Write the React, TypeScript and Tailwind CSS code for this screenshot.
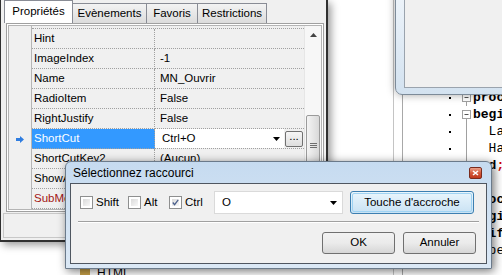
import React from 'react';

const props = [
  { name: 'Hint', value: '' },
  { name: 'ImageIndex', value: '-1' },
  { name: 'Name', value: 'MN_Ouvrir' },
  { name: 'RadioItem', value: 'False' },
  { name: 'RightJustify', value: 'False' },
  { name: 'ShortCut', value: 'Ctrl+O', selected: true },
  { name: 'ShortCutKey2', value: '(Aucun)' },
  { name: 'ShowAlwaysOnTop', value: 'False' },
  { name: 'SubMenuImages', value: '', red: true },
];

// code lines of the editor behind, y centre 98 + 17*i
const code = [
  { text: 'procedure', bold: true, fold: 'box' },
  { text: 'begin', bold: true, fold: 'box' },
  { text: '  Label1', bold: false, fold: 'line' },
  { text: '  Haut', bold: false, fold: 'line' },
  { text: 'end;', bold: true, fold: 'end' },
  { text: '', bold: false, fold: '' },
  { text: 'procedure', bold: true, fold: '' },
  { text: 'begin', bold: true, fold: '' },
  { text: '  if', bold: true, fold: '' },
  { text: '  pe', bold: false, fold: '' },
];

function DownArrow() {
  return (
    <svg width="7" height="4" viewBox="0 0 7 4">
      <path d="M0 0h7L3.5 4z" fill="#000" />
    </svg>
  );
}

function Fold({ kind }: { kind: string }) {
  return (
    <svg width="21" height="17" viewBox="0 0 21 17">
      {kind === 'box' && (
        <>
          <line x1="14.5" y1="12.5" x2="14.5" y2="17" stroke="#a0a0a0" />
          <rect x="10.5" y="4.5" width="8" height="8" fill="#fff" stroke="#a0a0a0" />
          <line x1="12.5" y1="8.5" x2="16.5" y2="8.5" stroke="#555" />
        </>
      )}
      {kind === 'line' && <line x1="14.5" y1="0" x2="14.5" y2="17" stroke="#a0a0a0" />}
      {kind === 'end' && <path d="M14.5 0v8.5h5" fill="none" stroke="#a0a0a0" />}
    </svg>
  );
}

function Checkbox({ checked }: { checked?: boolean }) {
  return (
    <div className="w-[13px] h-[13px] shrink-0 border border-[#8e8f8f] bg-white p-[2px]">
      <div className="w-full h-full bg-gradient-to-br from-[#dadada] to-[#f8f8f8] flex items-center justify-center">
        {checked && (
          <svg width="9" height="9" viewBox="0 0 9 9">
            <path d="M1 4.5l2.3 2.8L8 1" fill="none" stroke="#4a5f8c" strokeWidth="1.6" />
          </svg>
        )}
      </div>
    </div>
  );
}

export default function App() {
  return (
    <div className="relative w-[502px] h-[275px] overflow-hidden bg-white font-['Liberation_Sans',sans-serif] text-[11.5px] text-black">
      {/* code editor behind */}
      <div className="absolute left-[393px] top-0 w-[109px] h-[275px] flex border-l border-[#c4c4c4] bg-white">
        <div className="w-[9px] shrink-0 border-r border-[#a8a8a8]" />
        <div className="flex-1 flex flex-col pt-[89px] font-['Liberation_Mono',monospace] text-[13px]">
          {code.map((l, i) => (
            <div key={i} className="flex h-[17px] items-center">
              <div className="w-[49px] shrink-0 flex justify-end pr-[1px]">
                {i < 11 && <div className="w-[2px] h-[2px] bg-black" />}
              </div>
              <Fold kind={l.fold} />
              <span className={`whitespace-pre ${l.bold ? 'font-bold' : ''}`}>
                {l.text === 'end;' ? (
                  <>
                    end<span className="text-[#d00000]">;</span>
                  </>
                ) : (
                  l.text
                )}
              </span>
            </div>
          ))}
        </div>
      </div>

      {/* top right window */}
      <div className="absolute left-[395px] top-[-10px] w-[120px] h-[105px] rounded-bl-[7px] border border-[#7d8b99] bg-gradient-to-b from-[#eef4fa] to-[#d3e2f0] pl-[8px] pb-[6px] shadow-[0_0_8px_rgba(0,0,0,0.35)]">
        <div className="w-full h-full bg-[#f0f0f0] border-l border-b border-[#9aa3ad]" />
      </div>

      {/* HTML tree item behind the dialog */}
      <div className="absolute left-[80px] top-[264px] flex items-center gap-[7px] text-[12px]">
        <div className="w-[10px] h-[10px] bg-[#c9a248] rounded-[1px]" />
        <span>HTML</span>
      </div>

      {/* property inspector */}
      <div className="absolute left-0 top-0 w-[328px] h-[242px] flex flex-col bg-[#f0f0f0] border-l border-r-2 border-b-2 border-[#303030] shadow-[3px_3px_8px_rgba(0,0,0,0.4)]">
        <div className="h-[23px] flex items-end pl-[3px]">
          <div className="h-[23px] w-[69px] shrink-0 bg-white border border-b-0 border-[#898c95] flex items-center justify-center pb-[1px]">
            Propriétés
          </div>
          <div className="h-[20px] w-[74px] shrink-0 bg-gradient-to-b from-[#f3f3f3] to-[#dcdcdc] border-t border-r border-[#898c95] flex items-center justify-center">
            Evènements
          </div>
          <div className="h-[20px] w-[51px] shrink-0 bg-gradient-to-b from-[#f3f3f3] to-[#dcdcdc] border-t border-r border-[#898c95] flex items-center justify-center">
            Favoris
          </div>
          <div className="h-[20px] w-[69px] shrink-0 bg-gradient-to-b from-[#f3f3f3] to-[#dcdcdc] border-t border-r border-[#898c95] flex items-center justify-center">
            Restrictions
          </div>
        </div>

        <div className="ml-[5px] w-[318px] h-[189px] border border-[#a0a0a0] p-px bg-white">
          <div className="w-full h-full border border-[#b4b4b4] bg-[#f0f0f0] flex">
            <div className="w-[295px] flex flex-col">
              <div className="h-[3px] flex">
                <div className="w-[23px] border-r border-[#b5b5b5]" />
                <div className="flex-1 border-b border-dotted border-[#a0a0a0]" />
              </div>
              {props.map((p) => (
                <div key={p.name} className="flex h-[20px]">
                  <div className="w-[23px] shrink-0 border-r border-[#b5b5b5] flex items-center justify-center">
                    {p.selected && (
                      <svg width="8" height="7" viewBox="0 0 8 7">
                        <path d="M0 2h4V0l4 3.5L4 7V5H0z" fill="#2f7de0" />
                      </svg>
                    )}
                  </div>
                  <div
                    className={`w-[123px] shrink-0 border-r border-b border-dotted border-[#a0a0a0] pl-[2px] flex items-center whitespace-nowrap overflow-hidden ${
                      p.selected ? 'bg-[#3399ff] text-white' : p.red ? 'text-[#a31515]' : ''
                    }`}
                  >
                    {p.name}
                  </div>
                  {p.selected ? (
                    <div className="flex-1 border-b border-dotted border-[#a0a0a0] flex items-center">
                      <div className="h-full flex-1 bg-white flex items-center pl-[7px] pr-[4px]">
                        <span className="flex-1">{p.value}</span>
                        <DownArrow />
                      </div>
                      <div className="w-[20px] h-full flex items-center justify-center">
                        <div className="w-[18px] h-[16px] rounded-[2px] border border-[#707070] bg-gradient-to-b from-[#f6f6f6] to-[#dedede] flex items-center justify-center leading-none pb-[4px]">
                          ...
                        </div>
                      </div>
                    </div>
                  ) : (
                    <div className="flex-1 border-b border-dotted border-[#a0a0a0] pl-[5px] flex items-center">
                      {p.value}
                    </div>
                  )}
                </div>
              ))}
            </div>
            <div className="w-[17px] flex flex-col bg-[#f7f7f7] border-l border-[#e6e6e6]">
              <div className="h-[17px] flex items-center justify-center">
                <svg width="7" height="4" viewBox="0 0 7 4">
                  <path d="M0 4h7L3.5 0z" fill="#444" />
                </svg>
              </div>
              <div className="h-[72px]" />
              <div className="h-[60px] mx-px rounded-[2px] border border-[#9b9b9b] bg-gradient-to-r from-[#f4f4f4] to-[#d9d9d9] flex flex-col items-center justify-center gap-[1px]">
                <div className="w-[7px] h-px bg-[#6e6e6e]" />
                <div className="w-[7px] h-px bg-[#6e6e6e]" />
                <div className="w-[7px] h-px bg-[#6e6e6e]" />
              </div>
            </div>
          </div>
        </div>

        <div className="mx-[2px] mt-px h-[25px] border border-[#c8c8c8]" />
      </div>

      {/* shortcut dialog */}
      <div className="absolute left-[65px] top-[161px] w-[427px] h-[108px] flex flex-col rounded-t-[6px] border border-[#6b7a8a] bg-gradient-to-b from-[#c6dbf0] to-[#dbe8f5] shadow-[2px_2px_10px_rgba(0,0,0,0.55)]">
        <div className="h-[21px] flex items-center justify-between pl-[7px] pr-[9px] text-[12px]">
          <span>Sélectionnez raccourci</span>
          <div className="w-[13px] h-[12px] rounded-[2px] border border-[#7a2b1d] bg-gradient-to-b from-[#e9a08a] via-[#d4583a] to-[#c0381c] flex items-center justify-center">
            <svg width="7" height="6" viewBox="0 0 7 6">
              <path d="M1 1l5 4M6 1L1 5" stroke="#fff" strokeWidth="1.6" />
            </svg>
          </div>
        </div>
        <div className="mx-[4px] h-[81px] border border-[#4f5660] bg-[#f0f0f0] flex flex-col px-[7px] pt-[7px]">
          <div className="flex items-center h-[23px]">
            <div className="w-[50px] flex items-center gap-[3px] pl-[2px]">
              <Checkbox />
              <span>Shift</span>
            </div>
            <div className="w-[41px] flex items-center gap-[3px]">
              <Checkbox />
              <span>Alt</span>
            </div>
            <div className="w-[45px] flex items-center gap-[3px]">
              <Checkbox checked />
              <span>Ctrl</span>
            </div>
            <div className="w-[129px] h-[23px] mr-[7px] bg-white border border-[#dadada] flex items-center pl-[7px] pr-[5px]">
              <span className="flex-1">O</span>
              <DownArrow />
            </div>
            <div className="w-[124px] h-[23px] rounded-[3px] border border-[#3c7fb1] bg-gradient-to-b from-[#eaf6fd] to-[#c9e2f3] p-px">
              <div className="w-full h-full rounded-[2px] border border-[#9fd3f3] flex items-center justify-center">
                Touche d'accroche
              </div>
            </div>
          </div>
          <div className="mt-[7px] h-[2px] border-t border-[#a0a0a0] border-b border-b-white" />
          <div className="mt-[9px] flex justify-end gap-[8px] pr-[3px]">
            <div className="w-[73px] h-[22px] rounded-[3px] border border-[#707070] bg-gradient-to-b from-[#f2f2f2] via-[#ebebeb] to-[#d6d6d6] flex items-center justify-center">
              OK
            </div>
            <div className="w-[73px] h-[22px] rounded-[3px] border border-[#707070] bg-gradient-to-b from-[#f2f2f2] via-[#ebebeb] to-[#d6d6d6] flex items-center justify-center">
              Annuler
            </div>
          </div>
        </div>
      </div>
    </div>
  );
}
